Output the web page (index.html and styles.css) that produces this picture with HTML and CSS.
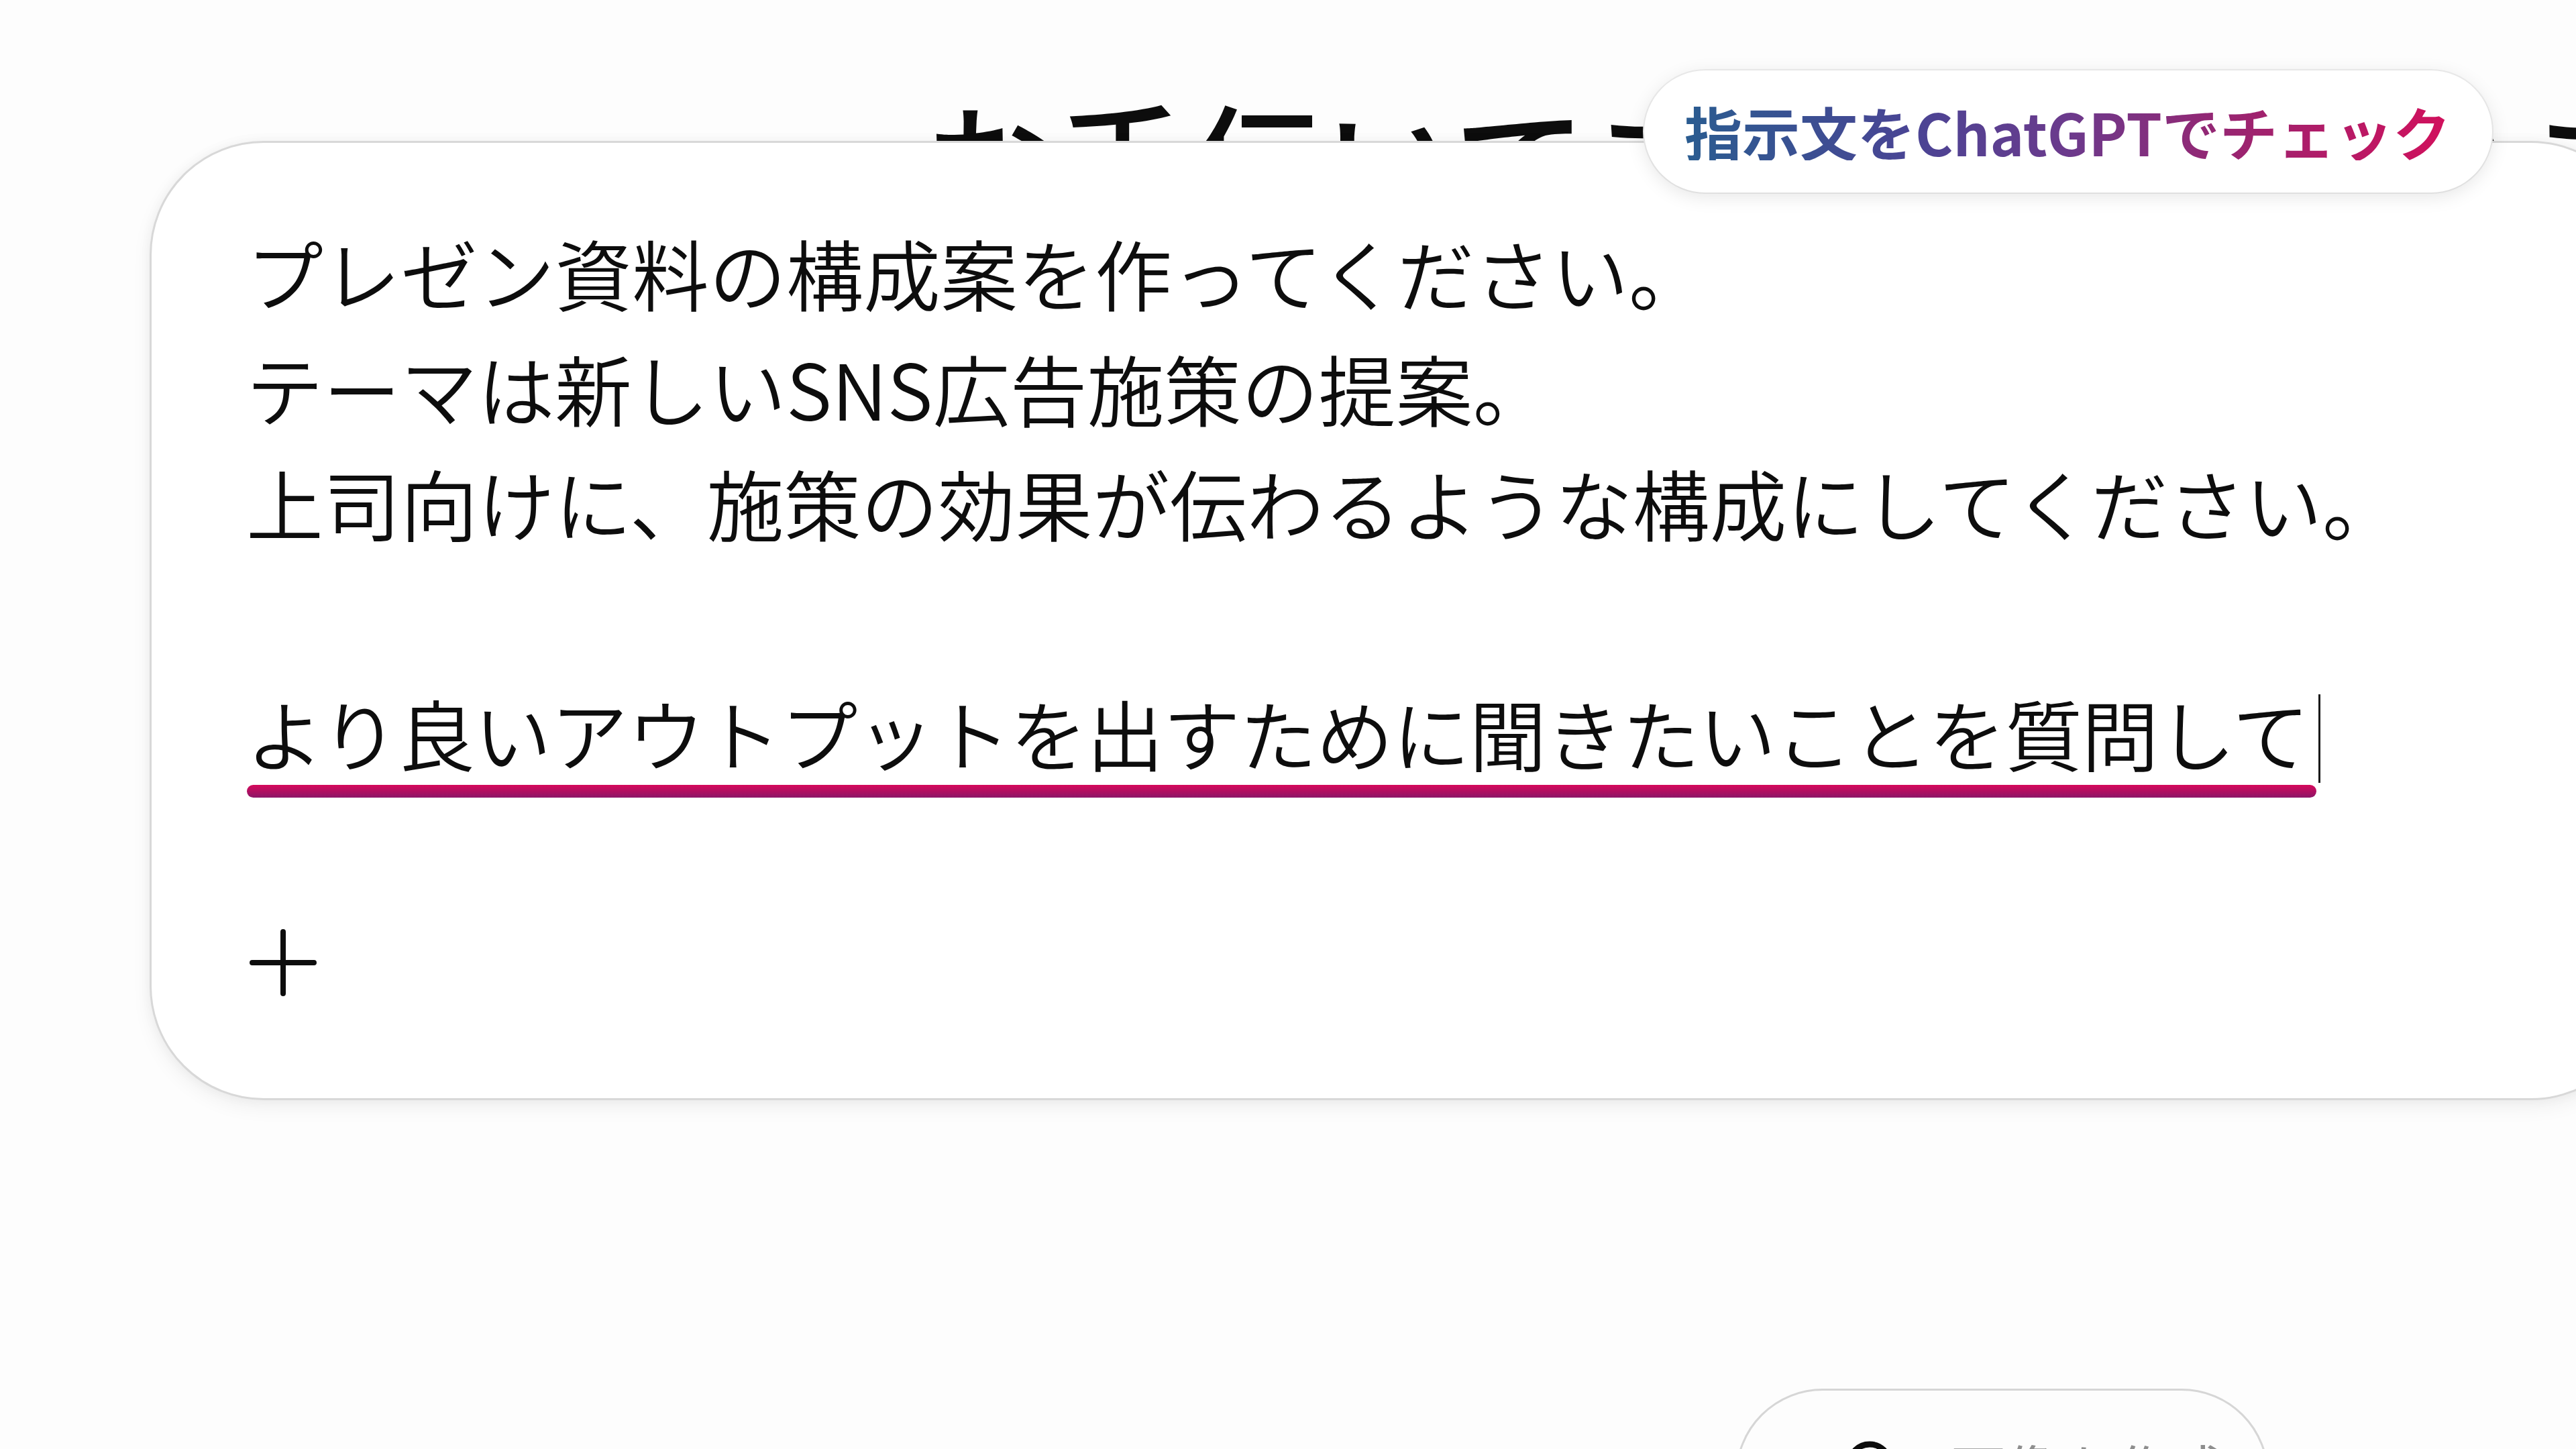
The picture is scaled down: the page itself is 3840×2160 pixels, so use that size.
FILE: index.html
```html
<!DOCTYPE html>
<html lang="ja">
<head>
    <meta charset="UTF-8">
    <meta name="viewport" content="width=device-width, initial-scale=1.0">
    <title>ChatGPT</title>
    <link rel="stylesheet" href="styles.css">
</head>
<body>
    <div class="screen">
        <h1 class="greeting">お手伝いできることはありますか？</h1>

        <div class="composer">
            <div class="prompt">
                <p>プレゼン資料の構成案を作ってください。</p>
                <p>テーマは新しいSNS広告施策の提案。</p>
                <p>上司向けに、施策の効果が伝わるような構成にしてください。</p>
                <p class="blank"></p>
                <p><span class="marked">より良いアウトプットを出すために聞きたいことを質問して</span><span class="caret"></span></p>
            </div>
            <div class="composer-tools">
                <svg class="plus" width="100" height="100" viewBox="0 0 100 100">
                    <path d="M4 50 H96 M50 4 V96" stroke="#0d0d0d" stroke-width="8" stroke-linecap="round" fill="none"/>
                </svg>
            </div>
        </div>

        <!-- 吹き出しラベル -->
        <div class="check-badge"><span>指示文をChatGPTでチェック</span></div>

        <div class="suggestions">
            <div class="chip">
                <svg class="chip-icon" width="70" height="100" viewBox="0 0 70 100">
                    <path d="M35 6 C18 6 6 19 6 35 C6 47 13 54 19 61 C22 65 23 69 23 74 H47 C47 69 48 65 51 61 C57 54 64 47 64 35 C64 19 52 6 35 6 Z" stroke="#0d0d0d" stroke-width="9" fill="none" stroke-linejoin="round"/>
                    <path d="M25 88 H45" stroke="#0d0d0d" stroke-width="9" stroke-linecap="round"/>
                </svg>
                <span class="chip-label">画像を作成</span>
            </div>
        </div>
    </div>
</body>
</html>
```

FILE: styles.css
```css
body {
    margin: 0;
    background-color: #fdfdfd;
    font-family: "Noto Sans CJK JP", "Noto Sans", sans-serif;
    color: #0d0d0d;
    overflow: hidden;
}
.screen {
    position: relative;
    width: 3840px;
    height: 2160px;
    overflow: hidden;
    padding-left: 223px;
    box-sizing: border-box;
}
.greeting {
    margin: 0 0 0 1150px;
    padding-top: 139px;
    font-size: 200px;
    line-height: 200px;
    font-weight: 500;
    white-space: nowrap;
}
.composer {
    position: relative;
    margin-top: -129px;
    width: 3720px;
    height: 1430px;
    box-sizing: border-box;
    padding: 107px 0 0 141px;
    background-color: #fff;
    border: 3px solid #d8d8d8;
    border-radius: 170px;
    box-shadow: 0 10px 30px rgba(0, 0, 0, 0.06), 0 0 18px rgba(0, 0, 0, 0.04);
}
.prompt p {
    margin: 0;
    font-size: 115px;
    font-weight: 350;
    line-height: 171.5px;
    white-space: nowrap;
}
.prompt .blank {
    height: 171.5px;
}
.marked {
    position: relative;
    display: inline-block;
    letter-spacing: -0.9px;
}
.marked::after {
    content: "";
    position: absolute;
    left: 1px;
    right: -11px;
    top: 164px;
    height: 19px;
    border-radius: 10px;
    background: linear-gradient(to bottom, #d6085a, #8c1668);
}
.caret {
    display: inline-block;
    width: 3px;
    height: 132px;
    margin-left: 14px;
    vertical-align: -26px;
    background-color: #1a1a1a;
}
.composer-tools {
    display: flex;
    margin-top: 207px;
    margin-left: 5px;
}
.plus {
    display: block;
}
.check-badge {
    position: absolute;
    left: 2451px;
    top: 105px;
    z-index: 2;
    height: 182px;
    box-sizing: border-box;
    display: flex;
    align-items: center;
    padding: 0 62px 0 60px;
    background-color: #fff;
    border-radius: 91px;
    box-shadow: 0 6px 28px rgba(0, 0, 0, 0.10), 0 0 0 2px #efefef;
}
.check-badge span {
    font-size: 86px;
    font-weight: 700;
    line-height: 1;
    white-space: nowrap;
    background: linear-gradient(90deg, #2a5c90 0%, #4a4494 30%, #6b3a8c 50%, #9a2470 72%, #d2105c 100%);
    -webkit-background-clip: text;
    background-clip: text;
    color: transparent;
}
.suggestions {
    margin: 430px 0 0 2364px;
}
.chip {
    width: 795px;
    height: 260px;
    box-sizing: border-box;
    display: flex;
    align-items: flex-start;
    gap: 86px;
    padding: 74px 0 0 162px;
    border: 3px solid #d6d6d6;
    border-radius: 130px;
    background-color: #fdfdfd;
    overflow: hidden;
}
.chip-label {
    font-size: 82px;
    line-height: 1;
    color: #8e8e8e;
    white-space: nowrap;
}
```
